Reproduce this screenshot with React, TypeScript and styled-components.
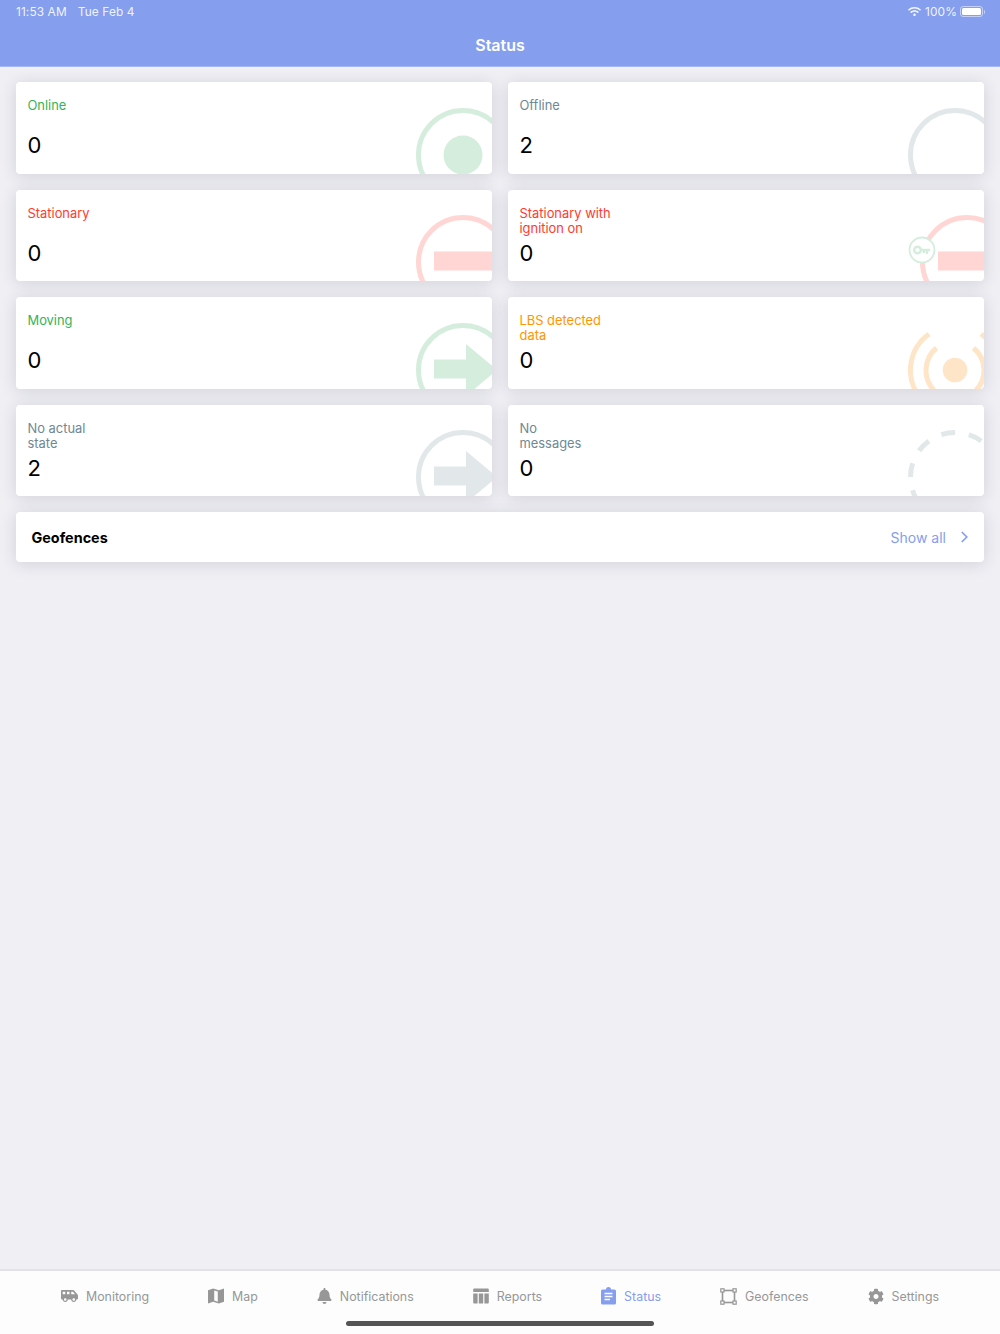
import React from "react";
import styled, { createGlobalStyle } from "styled-components";
import { FaBell, FaCog, FaShuttleVan, FaWifi } from "react-icons/fa";

const Global = createGlobalStyle`
  html, body { margin: 0; padding: 0; background: #efeff4; }
  * { box-sizing: border-box; }
`;

const Page = styled.div`
  position: relative;
  width: 1000px;
  height: 1334px;
  display: flex;
  flex-direction: column;
  overflow: hidden;
  background: #efeff4;
  font-family: Inter, "Liberation Sans", sans-serif;
`;

const Header = styled.header`
  height: 67px;
  flex: none;
  background: #859eee;
  border-bottom: 1px solid #a5b7f2;
  color: #fff;
  display: flex;
  flex-direction: column;
`;

const StatusBar = styled.div`
  height: 23px;
  padding: 0 17px 0 16px;
  display: flex;
  align-items: center;
  justify-content: space-between;
  font-size: 11.9px;
  letter-spacing: 0.1px;
  color: rgba(255, 255, 255, 0.9);
`;

const StatusGroup = styled.div<{ $gap: number }>`
  display: flex;
  align-items: center;
  gap: ${(p) => p.$gap}px;
`;

const Battery = styled.span`
  position: relative;
  width: 23px;
  height: 11px;
  border: 1px solid rgba(255, 255, 255, 0.5);
  border-radius: 3px;
  padding: 1px;
  display: block;
  margin-left: -1px;
  &::before {
    content: "";
    display: block;
    width: 100%;
    height: 100%;
    background: #fff;
    border-radius: 1.5px;
  }
  &::after {
    content: "";
    position: absolute;
    right: -3px;
    top: 2.5px;
    width: 1.5px;
    height: 4px;
    background: rgba(255, 255, 255, 0.5);
    border-radius: 0 1px 1px 0;
  }
`;

const Title = styled.div`
  flex: 1;
  display: flex;
  align-items: center;
  justify-content: center;
  font-size: 16px;
  font-weight: 600;
`;

const Content = styled.main`
  flex: 1;
  padding: 15px 16px 0;
  display: flex;
  flex-direction: column;
  gap: 15.75px;
`;

const Grid = styled.div`
  display: grid;
  grid-template-columns: 476px 476px;
  grid-auto-rows: 91.75px;
  column-gap: 16px;
  row-gap: 15.75px;
`;

const shadow = "0 2px 16px rgba(40, 40, 70, 0.15)";

const Card = styled.section`
  position: relative;
  overflow: hidden;
  background: #fff;
  border-radius: 4px;
  box-shadow: ${shadow};
  padding: 16px 12px 0 11.5px;
  display: flex;
  flex-direction: column;
`;

const Label = styled.div<{ $color: string }>`
  height: 32px;
  font-size: 12.9px;
  line-height: 15.4px;
  white-space: pre-line;
  color: ${(p) => p.$color};
`;

const Value = styled.div`
  font-size: 22px;
  line-height: 30px;
  color: #000;
`;

const Mark = styled.svg`
  position: absolute;
  right: 0;
  top: 25.75px;
  width: 76px;
  height: 66px;
`;

const GeoCard = styled.section`
  height: 50px;
  flex: none;
  background: #fff;
  border-radius: 4px;
  box-shadow: ${shadow};
  padding: 0 15px 0 15.5px;
  display: flex;
  align-items: center;
  justify-content: space-between;
`;

const GeoTitle = styled.div`
  font-size: 14.4px;
  font-weight: 700;
  color: #000;
`;

const ShowAll = styled.div`
  display: flex;
  align-items: center;
  gap: 15px;
  font-size: 14px;
  color: #859eee;
`;

const TabBar = styled.nav`
  height: 65px;
  flex: none;
  background: #fdfdfe;
  border-top: 2px solid #e2e2e8;
  padding-bottom: 13px;
  display: flex;
  align-items: center;
  justify-content: center;
  gap: 59px;
`;

const Tab = styled.div<{ $active?: boolean }>`
  display: flex;
  align-items: center;
  gap: 8px;
  font-size: 12.4px;
  color: ${(p) => (p.$active ? "#859eee" : "#979797")};
`;

const IconSlot = styled.span<{ $w: number }>`
  width: ${(p) => p.$w}px;
  height: 18px;
  display: flex;
  align-items: center;
  justify-content: center;
  flex: none;
`;

const HomeBar = styled.div`
  position: absolute;
  left: 346px;
  bottom: 8px;
  width: 308px;
  height: 5px;
  border-radius: 3px;
  background: #555;
`;

const GREEN = "#d5eddd";
const RED = "#ffd6d4";
const GREY = "#e2e8ea";
const ORANGE = "#ffe5c8";

const Ring = ({ color }: { color: string }) => (
  <circle cx="0" cy="0" r="44.5" fill="none" stroke={color} strokeWidth="5" />
);
const Bar = ({ color }: { color: string }) => <rect x="-29" y="-10.5" width="58" height="19" fill={color} />;
const Arrow = ({ color }: { color: string }) => (
  <path d="M-29 -10.5 H3 V-26 L34 0 L3 26 V8.5 H-29 Z" fill={color} />
);

const marks: Record<string, React.ReactNode> = {
  online: (
    <>
      <Ring color={GREEN} />
      <circle r="19.5" fill={GREEN} />
    </>
  ),
  offline: <Ring color={GREY} />,
  stationary: (
    <>
      <Ring color={RED} />
      <Bar color={RED} />
    </>
  ),
  ignition: (
    <>
      <g transform="translate(12 0)">
        <Ring color={RED} />
        <Bar color={RED} />
      </g>
      <circle cx="-33" cy="-12" r="12.5" fill="#fff" stroke={GREEN} strokeWidth="1.8" />
      <g fill="none" stroke={GREEN} strokeWidth="2.4">
        <circle cx="-37.5" cy="-12" r="3.3" />
        <path d="M-34 -12 H-25 M-28 -12 V-8 M-31 -12 V-9" />
      </g>
    </>
  ),
  moving: (
    <>
      <Ring color={GREEN} />
      <Arrow color={GREEN} />
    </>
  ),
  lbs: (
    <>
      <circle r="12.3" fill={ORANGE} />
      <g fill="none" stroke={ORANGE} strokeWidth="5">
        <path d="M-18.5 -22 A29 29 0 1 0 18.5 -22" />
        <path d="M-26 -36 A44.5 44.5 0 1 0 26 -36" />
      </g>
    </>
  ),
  noState: (
    <>
      <Ring color={GREY} />
      <Arrow color={GREY} />
    </>
  ),
  noMessages: (
    <circle
      r="44.5"
      fill="none"
      stroke={GREY}
      strokeWidth="5"
      strokeDasharray="13.98 13.98"
      transform="rotate(180)"
    />
  ),
};

const cards = [
  { key: "online", label: "Online", value: "0", color: "#34b35a" },
  { key: "offline", label: "Offline", value: "2", color: "#6f8894" },
  { key: "stationary", label: "Stationary", value: "0", color: "#ff3b30" },
  { key: "ignition", label: "Stationary with\nignition on", value: "0", color: "#ff3b30" },
  { key: "moving", label: "Moving", value: "0", color: "#34b35a" },
  { key: "lbs", label: "LBS detected\ndata", value: "0", color: "#ff9500" },
  { key: "noState", label: "No actual\nstate", value: "2", color: "#6f8894" },
  { key: "noMessages", label: "No\nmessages", value: "0", color: "#6f8894" },
];

const MapIcon = () => (
  <svg width="16" height="16" viewBox="0 0 16 16" fill="currentColor" fillRule="evenodd">
    <path d="M0 2.2 L5.2 0.4 L10.8 2.2 L16 0.4 V13.8 L10.8 15.6 L5.2 13.8 L0 15.6 Z M6.2 2.4 V12.6 L9.8 13.7 V3.5 Z" />
  </svg>
);
const TableIcon = () => (
  <svg width="16" height="16" viewBox="0 0 16 16" fill="currentColor">
    <path d="M1.2 0.5 H14.8 A1 1 0 0 1 15.8 1.5 V4 H0.2 V1.5 A1 1 0 0 1 1.2 0.5 Z" />
    <path d="M0.2 5.4 H4.6 V15.5 H1.2 A1 1 0 0 1 0.2 14.5 Z M5.8 5.4 H10.2 V15.5 H5.8 Z M11.4 5.4 H15.8 V14.5 A1 1 0 0 1 14.8 15.5 H11.4 Z" />
  </svg>
);
const ClipboardIcon = () => (
  <svg width="15" height="18" viewBox="0 0 15 18" fill="currentColor">
    <path d="M1.5 2.5 H5 A2.5 2.5 0 0 1 10 2.5 H13.5 A1.5 1.5 0 0 1 15 4 V16 A1.5 1.5 0 0 1 13.5 17.5 H1.5 A1.5 1.5 0 0 1 0 16 V4 A1.5 1.5 0 0 1 1.5 2.5 Z" />
    <path d="M3.5 6.5 H11.5 M3.5 9.5 H11.5 M3.5 12.5 H9" stroke="#fdfdfe" strokeWidth="1.3" />
  </svg>
);
const ShapeIcon = () => (
  <svg width="17" height="17" viewBox="0 0 17 17" fill="none" stroke="currentColor">
    <rect x="2.5" y="2.5" width="12" height="12" strokeWidth="1.6" />
    <g fill="#fdfdfe" strokeWidth="1.2">
      <rect x="0.8" y="0.8" width="3.2" height="3.2" />
      <rect x="13" y="0.8" width="3.2" height="3.2" />
      <rect x="0.8" y="13" width="3.2" height="3.2" />
      <rect x="13" y="13" width="3.2" height="3.2" />
    </g>
  </svg>
);

const tabs = [
  { label: "Monitoring", w: 17, icon: <FaShuttleVan size={18} /> },
  { label: "Map", w: 16, icon: <MapIcon /> },
  { label: "Notifications", w: 15, icon: <FaBell size={16} /> },
  { label: "Reports", w: 16, icon: <TableIcon /> },
  { label: "Status", w: 15, active: true, icon: <ClipboardIcon /> },
  { label: "Geofences", w: 17, icon: <ShapeIcon /> },
  { label: "Settings", w: 16, icon: <FaCog size={17} /> },
];

export default function App() {
  return (
    <Page>
      <Global />
      <Header>
        <StatusBar>
          <StatusGroup $gap={11}>
            <span>11:53 AM</span>
            <span>Tue Feb 4</span>
          </StatusGroup>
          <StatusGroup $gap={4}>
            <FaWifi size={13} />
            <span>100%</span>
            <Battery />
          </StatusGroup>
        </StatusBar>
        <Title>Status</Title>
      </Header>
      <Content>
        <Grid>
          {cards.map((c) => (
            <Card key={c.key}>
              <Label $color={c.color}>{c.label}</Label>
              <Value>{c.value}</Value>
              <Mark viewBox="-47 -47 76 66">{marks[c.key]}</Mark>
            </Card>
          ))}
        </Grid>
        <GeoCard>
          <GeoTitle>Geofences</GeoTitle>
          <ShowAll>
            <span>Show all</span>
            <svg width="8" height="12" viewBox="0 0 8 12" fill="none" stroke="#859eee" strokeWidth="1.7">
              <path d="M0.8 1 L5.8 6 L0.8 11" />
            </svg>
          </ShowAll>
        </GeoCard>
      </Content>
      <TabBar>
        {tabs.map((t) => (
          <Tab key={t.label} $active={t.active}>
            <IconSlot $w={t.w}>{t.icon}</IconSlot>
            <span>{t.label}</span>
          </Tab>
        ))}
      </TabBar>
      <HomeBar />
    </Page>
  );
}
